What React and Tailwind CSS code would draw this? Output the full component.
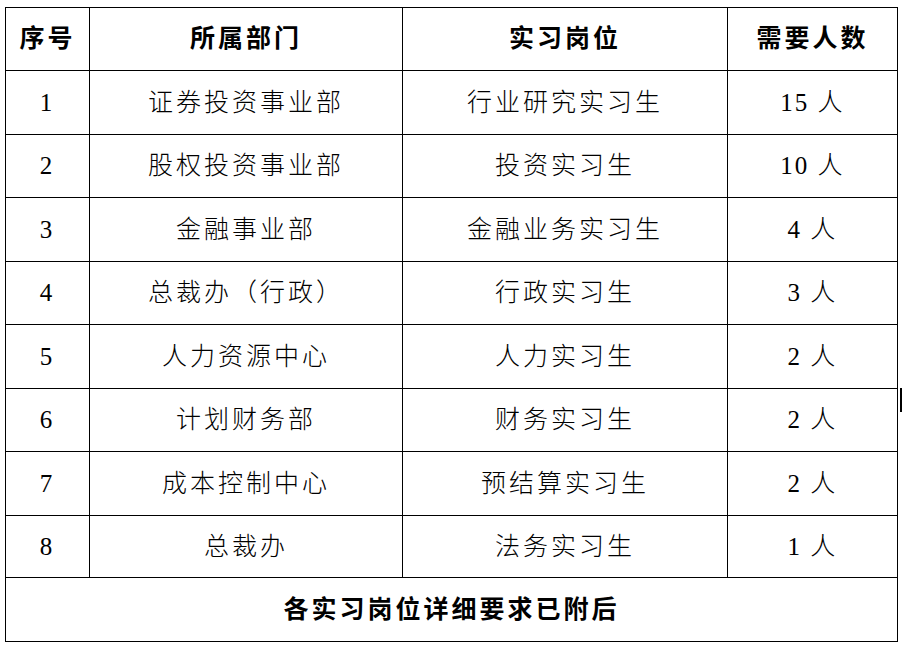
import React from "react";

const rows = [
  ["1", "证券投资事业部", "行业研究实习生", "15"],
  ["2", "股权投资事业部", "投资实习生", "10"],
  ["3", "金融事业部", "金融业务实习生", "4"],
  ["4", "总裁办（行政）", "行政实习生", "3"],
  ["5", "人力资源中心", "人力实习生", "2"],
  ["6", "计划财务部", "财务实习生", "2"],
  ["7", "成本控制中心", "预结算实习生", "2"],
  ["8", "总裁办", "法务实习生", "1"],
];

const heights = ["h-[64px]", "h-[63px]", "h-[64px]", "h-[63px]", "h-[64px]", "h-[63px]", "h-[64px]", "h-[62px]"];

const font = { fontFamily: '"Liberation Serif", "Noto Sans CJK SC", serif' };

export default function App() {
  return (
    <div className="relative w-[908px] h-[656px] bg-white text-black" style={font}>
      <div className="pt-[7px] pl-[5px]">
        <table className="border-collapse table-fixed w-[893px] text-[25px] tracking-[3px]">
          <colgroup>
            <col className="w-[84px]" />
            <col className="w-[313px]" />
            <col className="w-[325px]" />
            <col className="w-[170px]" />
          </colgroup>
          <thead>
            <tr className="h-[63px] font-bold">
              <td className="border border-black text-center">序号</td>
              <td className="border border-black text-center">所属部门</td>
              <td className="border border-black text-center">实习岗位</td>
              <td className="border border-black text-center">需要人数</td>
            </tr>
          </thead>
          <tbody className="font-light">
            {rows.map((r, i) => (
              <tr key={r[0]} className={heights[i]}>
                <td className="border border-black text-center">{r[0]}</td>
                <td className="border border-black text-center">{r[1]}</td>
                <td className="border border-black text-center">{r[2]}</td>
                <td className="border border-black text-center tracking-[2px]">{r[3]} 人</td>
              </tr>
            ))}
            <tr className="h-[64px]">
              <td colSpan={4} className="border border-black text-center font-bold">各实习岗位详细要求已附后</td>
            </tr>
          </tbody>
        </table>
      </div>
      <div className="absolute left-[900px] top-[388px] w-[2px] h-[24px] bg-black" />
    </div>
  );
}
